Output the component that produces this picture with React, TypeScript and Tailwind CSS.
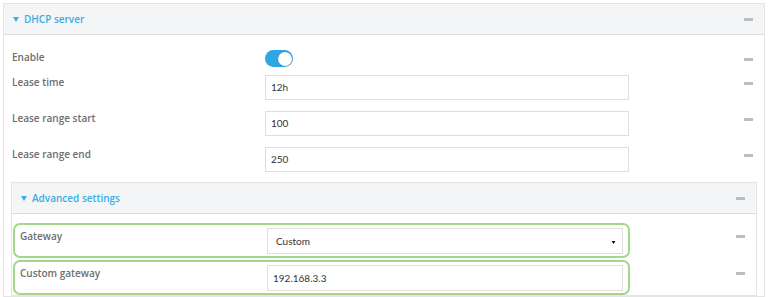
import React from 'react';

const Dash = () => <div className="h-[3px] w-[9px] bg-[#bdbdbd]" />;

const labelCls = "font-['Open_Sans',sans-serif] text-[10px] leading-[14px] font-semibold text-[#6e6e6e]";

const Caret = ({ className }: { className: string }) => (
  <svg viewBox="0 0 6 5" className={className} fill="currentColor">
    <path d="M0 0h6L3 5z" />
  </svg>
);

function Row({ label, children, last }: { label: string; children: React.ReactNode; last?: boolean }) {
  return (
    <div className={`flex items-start pl-[8px] pr-[11px] ${last ? 'mb-[10px]' : 'mb-[11px]'}`}>
      <div className={`w-[253px] ${labelCls}`}>{label}</div>
      {children}
      <div className="ml-auto mt-[7px]">
        <Dash />
      </div>
    </div>
  );
}

function TextInput({ value }: { value: string }) {
  return (
    <div className="flex h-[25px] w-[364px] items-center border border-[#dedede] bg-white pl-[5px] text-[10px] text-[#333]">
      {value}
    </div>
  );
}

function HighlightRow({ label, children }: { label: string; children: React.ReactNode }) {
  return (
    <div className="flex items-start pr-[11px]">
      <div className="ml-px flex h-[35px] w-[617px] items-start rounded-[7px] border-2 border-[#a3d88a] pl-[5px] pt-[3px]">
        <div className={`w-[247px] pt-px ${labelCls}`}>{label}</div>
        {children}
      </div>
      <div className="ml-auto mt-[12px]">
        <Dash />
      </div>
    </div>
  );
}

function PanelHeader({ title }: { title: string }) {
  return (
    <div className="flex h-[31px] items-center border-b border-[#dcdcdc] bg-[#f4f5f7] pl-[9px] pr-[11px]">
      <Caret className="mr-[5px] h-[5px] w-[6px] text-[#3aaee4]" />
      <span className="font-['Open_Sans',sans-serif] text-[10px] font-semibold text-[#3aaee4]">{title}</span>
      <div className="ml-auto">
        <Dash />
      </div>
    </div>
  );
}

export default function App() {
  return (
    <div className="h-[297px] w-[768px] overflow-hidden bg-white font-['Lato',sans-serif]">
      <div className="ml-[3px] mt-[3px] w-[762px] border border-[#e4e4e4] bg-white">
        <PanelHeader title="DHCP server" />

        <div className="pt-[15px]">
          <div className="mb-[8px] flex items-start pl-[8px] pr-[11px]">
            <div className={`w-[253px] ${labelCls}`}>Enable</div>
            <div className="flex h-[17px] w-[28px] items-center justify-end rounded-full bg-[#2fa6e2] pr-[1px]">
              <div className="h-[14px] w-[14px] rounded-full border-2 border-white bg-white shadow-[0_0_1px_rgba(0,0,0,0.4)]" />
            </div>
            <div className="ml-auto mt-[8px]">
              <Dash />
            </div>
          </div>

          <Row label="Lease time">
            <TextInput value="12h" />
          </Row>
          <Row label="Lease range start">
            <TextInput value="100" />
          </Row>
          <Row label="Lease range end" last>
            <TextInput value="250" />
          </Row>

          {/* Advanced settings */}
          <div className="mx-[7px] border border-[#e4e4e4]">
            <PanelHeader title="Advanced settings" />
            <div className="flex flex-col gap-[2px] pt-[9px]">
              <HighlightRow label="Gateway">
                <div className="flex h-[26px] w-[356px] items-center justify-between border border-[#dedede] bg-white pl-[8px] pr-[6px] text-[10px] text-[#333]">
                  <span>Custom</span>
                  <Caret className="mt-[2px] h-[3px] w-[5px] text-black" />
                </div>
              </HighlightRow>
              <HighlightRow label="Custom gateway">
                <div className="flex h-[26px] w-[356px] items-center border border-[#dedede] bg-white pl-[5px] text-[10px] text-[#333]">
                  192.168.3.3
                </div>
              </HighlightRow>
            </div>
          </div>
        </div>
      </div>
    </div>
  );
}
